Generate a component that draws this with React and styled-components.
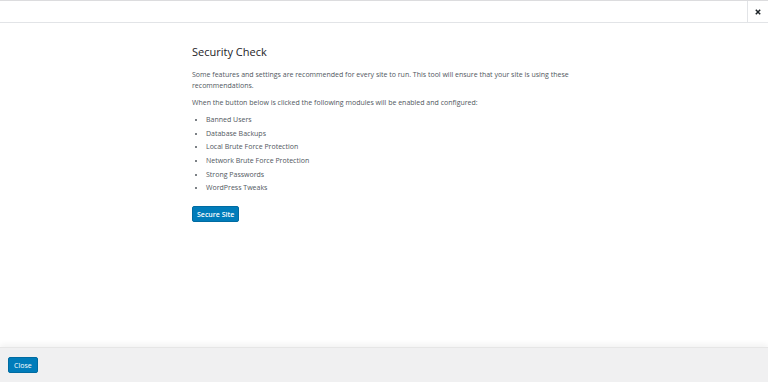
import React from "react";
import styled, { createGlobalStyle } from "styled-components";

const Global = createGlobalStyle`
  html, body { margin: 0; padding: 0; height: 100%; background: #fff; }
  #root { height: 100%; }
  body { font-family: "Open Sans", "Liberation Sans", sans-serif; }
`;

const Frame = styled.div`
  height: 382px;
  display: flex;
  flex-direction: column;
  border-top: 1px solid #dcdcde;
  box-sizing: border-box;
`;

const Header = styled.div`
  height: 21px;
  flex: none;
  display: flex;
  justify-content: flex-end;
  border-bottom: 1px solid #e2e4e7;
`;

const CloseX = styled.button`
  width: 21px;
  height: 21px;
  border: none;
  border-left: 1px solid #e2e4e7;
  background: #fff;
  padding: 0;
  display: flex;
  align-items: center;
  justify-content: center;
  cursor: pointer;
`;

const Body = styled.div`
  flex: 1;
  display: flex;
  justify-content: center;
`;

const Content = styled.div`
  width: 384px;
  padding-top: 21px;
  color: #50575e;
  font-size: 7px;
  line-height: 11px;
`;

const Title = styled.h1`
  margin: 0 0 9px;
  font-size: 11px;
  line-height: 16px;
  font-weight: 400;
  color: #1d2327;
`;

const Para = styled.p`
  margin: 0 0 6px;
`;

const List = styled.ul`
  margin: 6px 0 0;
  padding: 0 0 0 14px;
  list-style: disc;
`;

const Item = styled.li`
  line-height: 11px;
  margin-bottom: 2.7px;
`;

const Button = styled.button`
  font-family: inherit;
  font-size: 7px;
  font-weight: ${(p) => (p.$light ? 400 : 600)};
  color: #fff;
  background: #007cba;
  border: 1px solid #006ba1;
  border-radius: 2px;
  height: 16px;
  padding: 0 ${(p) => (p.$light ? 5 : 4)}px;
  cursor: pointer;
`;

const Actions = styled.div`
  margin-top: 13px;
`;

const Footer = styled.div`
  height: 35px;
  flex: none;
  background: #f0f0f1;
  box-shadow: 0 -3px 6px rgba(0, 0, 0, 0.05);
  border-top: 1px solid #e6e6e6;
  display: flex;
  align-items: center;
  padding-left: 8px;
  box-sizing: border-box;
`;

const modules = [
  "Banned Users",
  "Database Backups",
  "Local Brute Force Protection",
  "Network Brute Force Protection",
  "Strong Passwords",
  "WordPress Tweaks",
];

export default function App() {
  return (
    <>
      <Global />
      <Frame>
        <Header>
          <CloseX aria-label="Close">
            <svg width="6" height="6" viewBox="0 0 6 6">
              <path d="M0.8 0.8L5.2 5.2M5.2 0.8L0.8 5.2" stroke="#1d2327" strokeWidth="1.5" />
            </svg>
          </CloseX>
        </Header>
        <Body>
          <Content>
            <Title>Security Check</Title>
            <Para>
              Some features and settings are recommended for every site to run. This tool will ensure that your site is using these recommendations.
            </Para>
            <Para>When the button below is clicked the following modules will be enabled and configured:</Para>
            <List>
              {modules.map((m) => (
                <Item key={m}>{m}</Item>
              ))}
            </List>
            <Actions>
              <Button>Secure Site</Button>
            </Actions>
          </Content>
        </Body>
        <Footer>
          <Button $light>Close</Button>
        </Footer>
      </Frame>
    </>
  );
}
